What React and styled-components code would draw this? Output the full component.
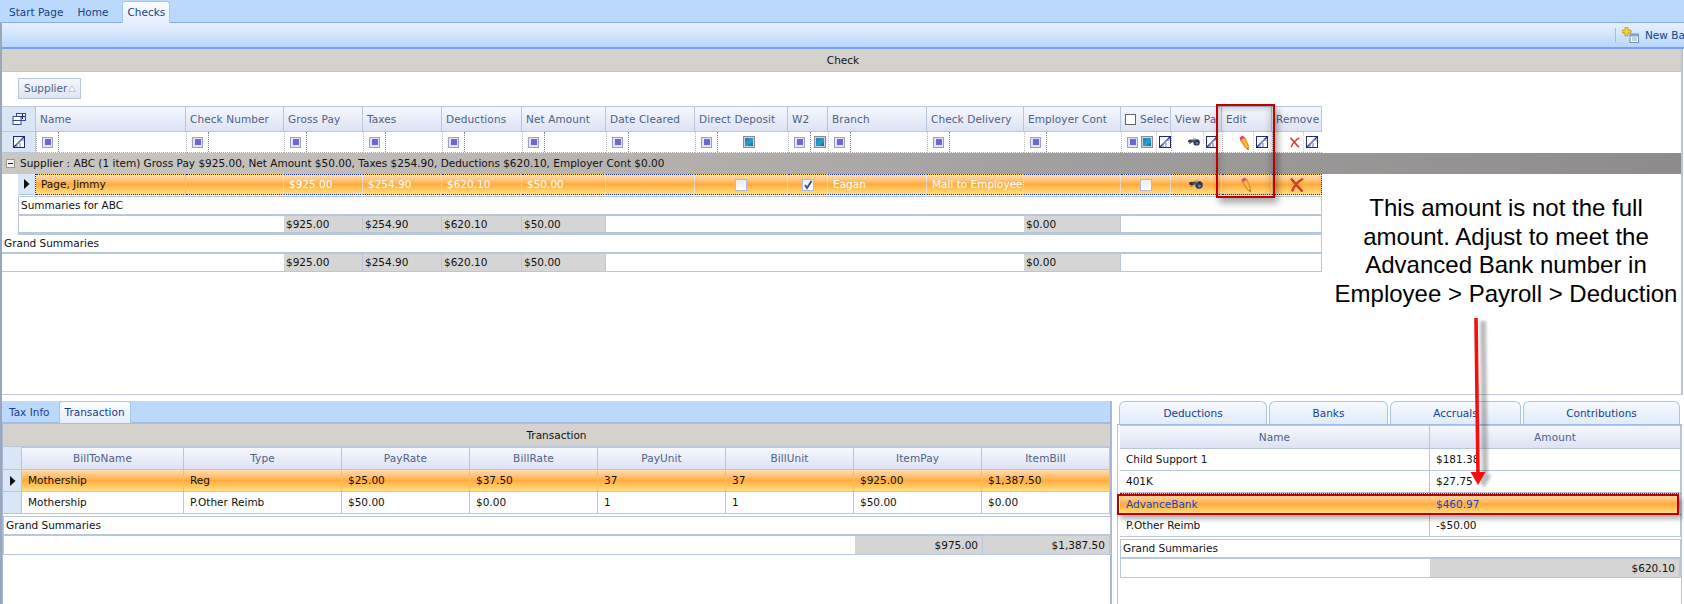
import React from "react";
import styled, { createGlobalStyle } from "styled-components";

const Global = createGlobalStyle`
  html, body { margin: 0; padding: 0; background: #fff; overflow: hidden; }
  #root { width: 1684px; height: 604px; }
  * { box-sizing: border-box; }
`;

const FONT = `"DejaVu Sans", Tahoma, sans-serif`;
const TOP_W = [150, 98, 79, 79, 80, 84, 89, 93, 40, 99, 97, 97, 50, 51, 50, 50];
const TOP_COLS = TOP_W.map((w) => `${w}px`).join(" ");
const GRID_LINE = "#b9c7da";
const SELECTED = "linear-gradient(#ffdcae 0%, #ffc680 25%, #ffab3d 50%, #ffc65f 75%, #ffe084 100%)";
const HEAD = "linear-gradient(#f6f8fe 0%, #e9edf9 50%, #dde2f3 100%)";

const Page = styled.div`
  position: relative; width: 1684px; height: 604px; overflow: hidden;
  display: flex; flex-direction: column; background: #fff;
  font: 10.5px/1 ${FONT}; color: #111;
`;
const TabBar = styled.div`
  height: 23px; flex: none; display: flex; align-items: flex-end; background: #bbd9fd;
  border-bottom: 1px solid ${(p) => p.$line || "#84ace6"}; padding-left: ${(p) => p.$pad || 0}px;
`;
const Tab = styled.div`
  height: 22px; display: flex; align-items: center; color: #15428b; white-space: nowrap;
  padding: 0 ${(p) => p.$padX ?? 5}px; margin-left: ${(p) => p.$gap || 0}px;
  margin-bottom: -1px;
  ${(p) => p.$active && `
    background: linear-gradient(#fbfdff, #e4eefd);
    border: 1px solid #a6c6f4; border-bottom: 0; border-radius: 3px 3px 0 0;
  `}
`;
const Body = styled.div`
  flex: 1; min-height: 0; display: flex; flex-direction: column;
  border-left: 2px solid #9aa7ba;
`;
const Toolbar = styled.div`
  height: 26px; flex: none; display: flex; align-items: center; justify-content: flex-end;
  background: linear-gradient(#e6f0fe, #d5e6fd 45%, #b7d5fb);
  border-bottom: 2px solid #78a5e8; white-space: nowrap; color: #15428b;
`;
const ToolSep = styled.div`width: 1px; height: 14px; background: #9fbde8; margin-right: 6px;`;
const ToolLabel = styled.span`margin-left: 6px; width: 39px;`;

const TopPanel = styled.div`
  height: 346px; flex: none; display: flex; flex-direction: column;
  border-bottom: 1px solid #c2c9de; border-right: 2px solid #b9c4d6;
  margin-right: 1px;
`;
const TitleBar = styled.div`
  height: 23px; flex: none; display: flex; align-items: center; justify-content: center;
  background: #d5d2cd; border-bottom: 1px solid ${GRID_LINE}; color: #111;
  padding: 1px 0 0 ${(p) => p.$pl || 0}px;
`;
const GroupPanel = styled.div`height: 34px; flex: none; padding: 6px 0 0 16px;`;
const GroupChip = styled.div`
  width: 63px; height: 21px; display: flex; align-items: center; gap: 1px; padding-left: 5px;
  background: linear-gradient(#f4f6fd, #dfe4f4); border: 1px solid #b9c7da; color: #4d6185; white-space: nowrap;
`;
const Row = styled.div`
  display: grid; flex: none;
  grid-template-columns: ${(p) => p.$cols};
  height: ${(p) => p.$h}px;
  margin-left: ${(p) => p.$ml || 0}px;
`;
const HeadCell = styled.div`
  display: flex; align-items: center; gap: 4px; overflow: hidden; white-space: nowrap;
  justify-content: ${(p) => (p.$center ? "center" : "flex-start")};
  padding-left: ${(p) => (p.$center ? 0 : 4)}px;
  background: ${HEAD}; color: #4d6185;
  border-right: 1px solid ${GRID_LINE}; border-top: 1px solid ${GRID_LINE}; border-bottom: 1px solid ${GRID_LINE};
  letter-spacing: .1px;
`;
const Indicator = styled.div`
  display: flex; align-items: center; justify-content: center;
  background: #d8e6f6; border-right: 1px solid ${GRID_LINE}; border-bottom: 1px solid ${GRID_LINE};
  ${(p) => p.$top && `border-top: 1px solid ${GRID_LINE};`}
  ${(p) => p.$dotted && `border-right: 1px dotted #123a8c;`}
`;
const FilterCell = styled.div`
  display: flex; align-items: center; padding-left: 5px; gap: 3px;
  border-left: 1px dotted #bbb; border-bottom: 1px dotted #aaa;
  justify-content: ${(p) => (p.$end ? "flex-end" : "flex-start")};
  ${(p) => p.$end && "padding-right: 2px;"}
`;
const FilterSlot = styled.div`
  flex: 1; align-self: stretch; display: flex; align-items: center; justify-content: center;
  border-left: 1px dotted #888; margin-left: 2px; padding-right: ${(p) => p.$pr || 0}px;
`;
const ClearSlot = styled.div`
  display: flex; align-items: center; height: 100%; padding: 0 2px; border-left: 1px dotted #ccc;
`;
const FilterDot = styled.span`
  flex: none; width: 11px; height: 11px; display: flex; align-items: center; justify-content: center;
  background: #e6e4f4; border: 1px solid #a09dc6;
  &::after { content: ""; width: 6px; height: 6px; background: #6a68d4; }
`;
const CheckFilter = styled.span`
  flex: none; width: 12px; height: 12px; border: 1px solid #8b8b8b;
  background: linear-gradient(135deg, #1f76b4, #2b9fc8 55%, #0f4d85); box-shadow: inset 0 0 0 1px #c8d8e2;
`;
const GroupRow = styled.div`
  height: 21px; flex: none; display: flex; align-items: center; gap: 5px; padding-left: 4px; white-space: nowrap;
  background: linear-gradient(90deg, #cbc8c3 0%, #b7b3b0 35%, #a09e9d 65%, #8e8b8c 100%);
  color: #111;
`;
const Expander = styled.span`
  width: 9px; height: 9px; border: 1px solid #999; background: #f4f4f4; display: flex; align-items: center; justify-content: center;
  &::after { content: ""; width: 5px; height: 1px; background: #222; }
`;
const SelectedCell = styled.div`
  display: flex; align-items: center; overflow: hidden; white-space: nowrap; padding-left: 5px;
  justify-content: ${(p) => (p.$center ? "center" : "flex-start")};
  ${(p) => p.$center && "padding-left: 0;"}
  background: ${SELECTED};
  color: ${(p) => (p.$dark ? "#111" : "#fff")};
  border-top: 1px dotted #16308c; border-bottom: 1px dotted #16308c;
  border-right: ${(p) => (p.$solid ? `1px solid ${GRID_LINE}` : "1px dotted #f4ead8")};
  ${(p) => p.$last && "border-right: 1px dotted #16308c;"}
`;
const Check = styled.span`
  width: 12px; height: 12px; flex: none; display: flex; align-items: center; justify-content: center;
  background: linear-gradient(#e9ecf4, #fff); border: 1px solid #b0bbdc;
`;
const HeadCheck = styled.span`width: 11px; height: 11px; flex: none; background: #fff; border: 1px solid #666;`;
const LabelRow = styled.div`
  flex: none; display: flex; align-items: center; padding-left: ${(p) => p.$pad || 2}px;
  height: ${(p) => p.$h}px; width: ${(p) => p.$w}px; margin-left: ${(p) => p.$ml || 0}px; margin-top: ${(p) => p.$mt || 0}px;
  background: #fff; border: 1px solid ${GRID_LINE}; ${(p) => !p.$top && "border-top: 0;"}
  border-left-width: ${(p) => (p.$noLeft ? 0 : 1)}px;
`;
const SumRow = styled.div`
  flex: none; display: flex; height: ${(p) => p.$h}px; width: ${(p) => p.$w}px; margin-left: ${(p) => p.$ml || 0}px;
  border: 1px solid ${GRID_LINE}; border-top-width: 1px; border-bottom-width: ${(p) => p.$bb || 1}px;
  border-left-width: ${(p) => (p.$noLeft ? 0 : 1)}px;
`;
const SumCell = styled.div`
  flex: none; width: ${(p) => (p.$w ? `${p.$w}px` : "auto")}; ${(p) => !p.$w && "flex: 1;"}
  display: flex; align-items: center; padding: 0 ${(p) => (p.$right ? 4 : 2)}px;
  justify-content: ${(p) => (p.$right ? "flex-end" : "flex-start")};
  background: ${(p) => (p.$gray ? "#d5d5d5" : "#fff")};
  border-right: 1px solid ${(p) => (p.$gray ? GRID_LINE : "transparent")};
`;
const Lower = styled.div`flex: 1; min-height: 0; display: flex; margin-top: 6px;`;
const LeftPane = styled.div`
  width: 1110px; flex: none; display: flex; flex-direction: column;
  border-right: 2px solid #a7b7d6;
`;
const LeftTabs = styled(TabBar)`border-bottom: 2px solid #a5bde2;`;
const LeftInner = styled.div`flex: 1; display: flex; flex-direction: column; border-left: 1px solid #a7b7d6;`;
const RightPane = styled.div`width: 565px; margin-left: 5px; flex: none; display: flex; flex-direction: column;`;
const RTabs = styled.div`height: 24px; flex: none; display: flex; gap: 2px; padding-left: 2px; border-bottom: 1px solid #9dbbe8;`;
const RTab = styled.div`
  width: ${(p) => p.$w}px; display: flex; align-items: center; justify-content: center; color: #15428b;
  background: linear-gradient(#f6f9ff, #e2ebfb); border: 1px solid #a6c4ee; border-bottom: 0; border-radius: 6px 6px 0 0;
`;
const RInner = styled.div`
  flex: 1; display: flex; flex-direction: column; padding-left: 2px; border-left: 1px solid #b3c6e6; border-right: 1px solid #b3c6e6;
`;
const DataCell = styled.div`
  display: flex; align-items: center; white-space: nowrap; padding-left: ${(p) => p.$pad ?? 6}px;
  background: ${(p) => (p.$sel ? SELECTED : "#fff")};
  color: ${(p) => (p.$blue ? "#1646c4" : "#111")};
  border-right: 1px solid ${GRID_LINE}; border-bottom: 1px solid ${GRID_LINE};
  ${(p) => p.$blue && "border-top: 1px dotted #333; border-bottom: 1px dotted #333;"}
`;
const RedBox = styled.div`
  position: absolute; left: ${(p) => p.$x}px; top: ${(p) => p.$y}px; width: ${(p) => p.$w}px; height: ${(p) => p.$h}px;
  border: 2.5px solid #c00000;
  box-shadow: ${(p) => (p.$flat
    ? "3px 4px 5px rgba(0,0,0,.3)"
    : "3px 5px 7px rgba(0,0,0,.35), inset -3px 2px 6px rgba(0,0,0,.18), inset 3px 0 6px rgba(0,0,0,.12)")};
  pointer-events: none;
`;
const Note = styled.div`
  position: absolute; left: 1300px; top: 194px; width: 412px; text-align: center;
  font: 24px/28.7px "Liberation Sans", Arial, sans-serif; color: #000;
`;
const ArrowLayer = styled.svg`position: absolute; left: 1465px; top: 315px; overflow: visible;`;
const ArrowShadow = styled.g`filter: blur(1.6px); opacity: .32;`;

const ClearIcon = () => (
  <svg width="12" height="12" viewBox="0 0 12 12">
    <rect x=".5" y=".5" width="11" height="11" fill="#fff" stroke="#26267a" />
    <path d="M1 11 L11 1" stroke="#26267a" strokeWidth="1.3" />
    <path d="M4 11 L4 8 L8 4 L11 4 M7 11 L7 7" stroke="#6f8fd6" strokeWidth="1.2" fill="none" />
  </svg>
);
const ChooserIcon = () => (
  <svg width="14" height="14" viewBox="0 0 14 14">
    <rect x="4.5" y="1.5" width="9" height="7" fill="#e9edf9" stroke="#3a4f8f" />
    <rect x="1" y="4.5" width="8" height="4" fill="#fff" stroke="#3a4f8f" />
    <rect x="1" y="8.5" width="8" height="4" fill="#fff" stroke="#3a4f8f" />
    <path d="M10.5 2v5M8 4.5h5" stroke="#1b2a6b" strokeWidth="1" />
  </svg>
);
const RowArrow = () => (
  <svg width="7" height="10" viewBox="0 0 7 10"><path d="M1 0L6.5 5L1 10Z" fill="#111" /></svg>
);
const SortMark = () => (
  <svg width="8" height="7" viewBox="0 0 8 7"><path d="M4 .8L7.4 6.3H.6Z" fill="#fff" stroke="#aab2c6" strokeWidth=".8" /></svg>
);
const Binoculars = ({ big }) => (
  <svg width={big ? 14 : 12} height={big ? 9 : 8} viewBox="0 0 14 9">
    <ellipse cx="2.8" cy="3.6" rx="2.8" ry="1.9" fill="#33373f" />
    <ellipse cx="10" cy="5" rx="3.7" ry="3.7" fill="#2b3245" />
    <rect x="4" y="1.6" width="5" height="3" fill="#50555f" />
    <circle cx="10.4" cy="6" r="1.6" fill="#4f86c6" />
    <rect x="6" y="0" width="3" height="2" fill="#a4a8ae" />
    <circle cx="2.4" cy="6" r="1" fill="#7a7f88" />
  </svg>
);
const Pencil = () => (
  <svg width="11" height="15" viewBox="0 0 11 15">
    <path d="M1 5L6 2.5L10 11.5L9 14.5L6 12.5Z" fill="#f6a02a" stroke="#d07814" strokeWidth=".5" />
    <path d="M4.2 4L8 12.5" stroke="#ffd27a" strokeWidth="1" />
    <path d="M.5 2.5L3.5.4L6 2.6L1.2 5.2Z" fill="#e83f8c" />
    <path d="M8.6 13.2L9.6 14.6" stroke="#4a3a20" strokeWidth="1" />
  </svg>
);
const RedX = ({ big }) => (
  <svg width={big ? 15 : 11} height={big ? 14 : 13} viewBox="0 0 15 14">
    <path d="M2 .5C5 4 9 9 13.5 13.5" stroke={big ? "#c93a28" : "#dc3022"} strokeWidth={big ? 2.4 : 2} fill="none" />
    <path d="M14 .8C9 3.5 5 8 3 13.5" stroke={big ? "#d2412c" : "#e2382a"} strokeWidth={big ? 2.4 : 2} fill="none" />
  </svg>
);
const CheckMark = () => (
  <svg width="10" height="10" viewBox="0 0 10 10"><path d="M2 5L4 8L8.5 1" stroke="#33508f" strokeWidth="1.8" fill="none" /></svg>
);
const NewIcon = () => (
  <svg width="17" height="16" viewBox="0 0 17 16">
    <path d="M3 0h3v3h3v3H6v3H3V6H0V3h3Z" fill="#f4d03f" stroke="#a98a18" strokeWidth=".7" />
    <rect x="8" y="7" width="8.5" height="8.5" fill="#fff" stroke="#6f8fb8" />
    <rect x="8" y="7" width="8.5" height="2.5" fill="#7ea3d6" />
    <path d="M10 11h5M10 13h5" stroke="#8aa" />
  </svg>
);

const topHeads = ["Name", "Check Number", "Gross Pay", "Taxes", "Deductions", "Net Amount", "Date Cleared", "Direct Deposit", "W2", "Branch", "Check Delivery", "Employer Cont", "Selec", "View Pa", "Edit", "Remove"];

const filterCells = topHeads.map((h) => {
  if (h === "Direct Deposit") return <FilterCell key={h}><FilterDot /><FilterSlot $pr={8}><CheckFilter /></FilterSlot></FilterCell>;
  if (h === "W2") return <FilterCell key={h}><FilterDot /><FilterSlot><CheckFilter /></FilterSlot></FilterCell>;
  if (h === "Selec") return <FilterCell key={h}><FilterDot /><CheckFilter /><ClearSlot><ClearIcon /></ClearSlot></FilterCell>;
  if (h === "View Pa") return <FilterCell key={h} $end><Binoculars /><ClearSlot><ClearIcon /></ClearSlot></FilterCell>;
  if (h === "Edit") return <FilterCell key={h} $end><Pencil /><ClearSlot><ClearIcon /></ClearSlot></FilterCell>;
  if (h === "Remove") return <FilterCell key={h} $end><RedX /><ClearSlot><ClearIcon /></ClearSlot></FilterCell>;
  return <FilterCell key={h}><FilterDot /><FilterSlot /></FilterCell>;
});

const TopSummary = ({ first }) => (
  <>
    <SumCell $w={first} />
    <SumCell $w={79} $gray>$925.00</SumCell>
    <SumCell $w={79} $gray>$254.90</SumCell>
    <SumCell $w={80} $gray>$620.10</SumCell>
    <SumCell $w={84} $gray>$50.00</SumCell>
    <SumCell $w={418} />
    <SumCell $w={97} $gray>$0.00</SumCell>
    <SumCell />
  </>
);

const TX_COLS = "19px 162px 158px 128px 128px 128px 128px 128px 128px";
const txHeads = ["BillToName", "Type", "PayRate", "BillRate", "PayUnit", "BillUnit", "ItemPay", "ItemBill"];
const txRows = [
  ["Mothership", "Reg", "$25.00", "$37.50", "37", "37", "$925.00", "$1,387.50"],
  ["Mothership", "P.Other Reimb", "$50.00", "$0.00", "1", "1", "$50.00", "$0.00"],
];
const DED_COLS = "310px 251px";
const dedRows = [
  ["Child Support 1", "$181.38"],
  ["401K", "$27.75"],
  ["AdvanceBank", "$460.97", true],
  ["P.Other Reimb", "-$50.00"],
];

export default function App() {
  return (
    <Page>
      <Global />
      <TabBar>
        <Tab $padX={9}>Start Page</Tab>
        <Tab $padX={5}>Home</Tab>
        <Tab $active $padX={4} $gap={9}>Checks</Tab>
      </TabBar>
      <Body>
        <Toolbar>
          <ToolSep />
          <NewIcon />
          <ToolLabel>New Ba</ToolLabel>
        </Toolbar>
        <TopPanel>
          <TitleBar $pl={3}>Check</TitleBar>
          <GroupPanel>
            <GroupChip>Supplier<SortMark /></GroupChip>
          </GroupPanel>
          <Row $cols={`34px ${TOP_COLS}`} $h={26}>
            <Indicator $top><ChooserIcon /></Indicator>
            {topHeads.map((h) => (
              <HeadCell key={h}>{h === "Selec" && <HeadCheck />}{h}</HeadCell>
            ))}
          </Row>
          <Row $cols={`34px ${TOP_COLS}`} $h={21}>
            <Indicator><ClearIcon /></Indicator>
            {filterCells}
          </Row>
          <GroupRow>
            <Expander />
            Supplier : ABC (1 item) Gross Pay $925.00, Net Amount $50.00, Taxes $254.90, Deductions $620.10, Employer Cont $0.00
          </GroupRow>
          <Row $cols={`18px ${TOP_COLS}`} $h={21} $ml={16}>
            <Indicator $dotted><RowArrow /></Indicator>
            <SelectedCell $dark $solid>Page, Jimmy</SelectedCell>
            <SelectedCell />
            <SelectedCell>$925.00</SelectedCell>
            <SelectedCell>$254.90</SelectedCell>
            <SelectedCell>$620.10</SelectedCell>
            <SelectedCell>$50.00</SelectedCell>
            <SelectedCell />
            <SelectedCell $center><Check /></SelectedCell>
            <SelectedCell $center><Check><CheckMark /></Check></SelectedCell>
            <SelectedCell>Eagan</SelectedCell>
            <SelectedCell>Mail to Employee</SelectedCell>
            <SelectedCell />
            <SelectedCell $center><Check /></SelectedCell>
            <SelectedCell $center><Binoculars big /></SelectedCell>
            <SelectedCell $center><Pencil /></SelectedCell>
            <SelectedCell $center $last><RedX big /></SelectedCell>
          </Row>
          <LabelRow $h={19} $w={1304} $ml={16} $mt={1} $top>Summaries for ABC</LabelRow>
          <SumRow $h={20} $w={1304} $ml={16} $bb={3}>
            <TopSummary first={265} />
          </SumRow>
          <LabelRow $h={18} $w={1320} $noLeft>Grand Summaries</LabelRow>
          <SumRow $h={19} $w={1320} $noLeft>
            <TopSummary first={282} />
          </SumRow>
        </TopPanel>
        <Lower>
          <LeftPane>
            <LeftTabs>
              <Tab $padX={7}>Tax Info</Tab>
              <Tab $active $gap={2}>Transaction</Tab>
            </LeftTabs>
            <LeftInner>
              <TitleBar>Transaction</TitleBar>
              <Row $cols={TX_COLS} $h={23}>
                <Indicator />
                {txHeads.map((h) => <HeadCell key={h} $center>{h}</HeadCell>)}
              </Row>
              {txRows.map((r, i) => (
                <Row key={i} $cols={TX_COLS} $h={22}>
                  <Indicator>{i === 0 && <RowArrow />}</Indicator>
                  {r.map((c, j) => <DataCell key={j} $sel={i === 0}>{c}</DataCell>)}
                </Row>
              ))}
              <LabelRow $h={19} $w={1108} $mt={2} $top>Grand Summaries</LabelRow>
              <SumRow $h={20} $w={1108}>
                <SumCell $w={851} />
                <SumCell $w={128} $gray $right>$975.00</SumCell>
                <SumCell $gray $right>$1,387.50</SumCell>
              </SumRow>
            </LeftInner>
          </LeftPane>
          <RightPane>
            <RTabs>
              <RTab $w={148}>Deductions</RTab>
              <RTab $w={119}>Banks</RTab>
              <RTab $w={131}>Accruals</RTab>
              <RTab $w={157}>Contributions</RTab>
            </RTabs>
            <RInner>
              <Row $cols={DED_COLS} $h={24}>
                {["Name", "Amount"].map((h) => <HeadCell key={h} $center>{h}</HeadCell>)}
              </Row>
              {dedRows.map((r, i) => (
                <Row key={i} $cols={DED_COLS} $h={22}>
                  <DataCell $sel={r[2]} $blue={r[2]}>{r[0]}</DataCell>
                  <DataCell $sel={r[2]} $blue={r[2]}>{r[1]}</DataCell>
                </Row>
              ))}
              <LabelRow $h={19} $w={561} $mt={2} $top>Grand Summaries</LabelRow>
              <SumRow $h={20} $w={561}>
                <SumCell $w={309} />
                <SumCell $gray $right>$620.10</SumCell>
              </SumRow>
            </RInner>
          </RightPane>
        </Lower>
      </Body>
      <RedBox $x={1216} $y={104} $w={59} $h={94} />
      <Note>This amount is not the full<br />amount. Adjust to meet the<br />Advanced Bank number in<br />Employee &gt; Payroll &gt; Deduction</Note>
      <RedBox $flat $x={1117} $y={494} $w={562} $h={21} />
      <ArrowLayer width="30" height="180" viewBox="0 0 30 180">
        <ArrowShadow>
          <path d="M11 3 L13 160" stroke="#333" strokeWidth="6" transform="translate(7 3)" />
          <path d="M5.5 157 L20.5 157 L13 170Z" fill="#333" transform="translate(6 3)" />
        </ArrowShadow>
        <path d="M11 3 L13 160" stroke="#f40f0f" strokeWidth="3.6" />
        <path d="M5.5 157 L20.5 157 L13 170Z" fill="#f40f0f" />
      </ArrowLayer>
    </Page>
  );
}
